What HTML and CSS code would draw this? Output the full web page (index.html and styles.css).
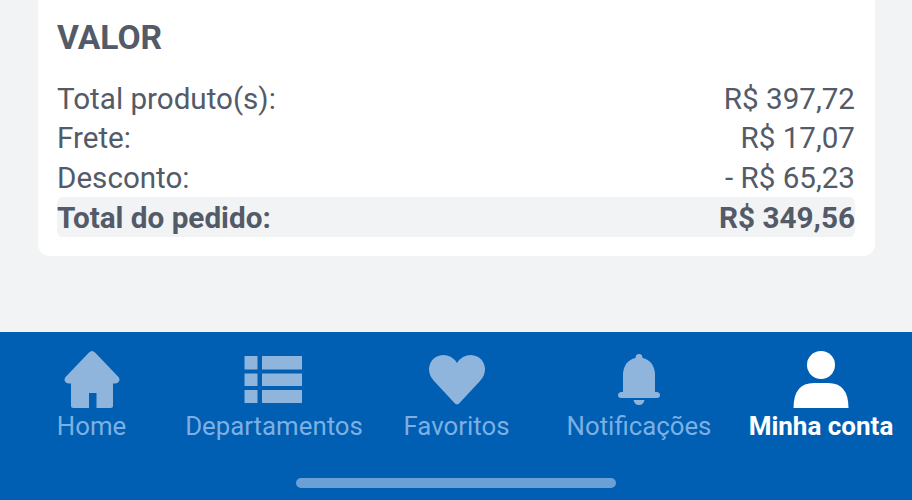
FILE: index.html
```html
<!DOCTYPE html>
<html lang="pt-BR">
<head>
    <meta charset="UTF-8">
    <meta name="viewport" content="width=device-width, initial-scale=1.0">
    <title>Pedido</title>
    <link rel="stylesheet" href="styles.css">
</head>
<body>
    <main class="content">
        <section class="card">
            <h2 class="card-title">VALOR</h2>
            <div class="row"><span>Total produto(s):</span><span>R$ 397,72</span></div>
            <div class="row"><span>Frete:</span><span>R$ 17,07</span></div>
            <div class="row"><span>Desconto:</span><span>- R$ 65,23</span></div>
            <div class="row row-total"><span>Total do pedido:</span><span>R$ 349,56</span></div>
        </section>
    </main>

    <nav class="tabbar">
        <div class="tabs">
            <a class="tab tab-wide">
                <svg class="tab-icon" viewBox="0 0 60 60" width="60" height="60">
                    <path d="M30 1 Q31.500 1 33 2.500 L56.500 27 Q58.500 30 56.500 32 Q55.500 33.500 51 33.500 L51 55.500 Q51 58 48.500 58 L34.500 58 L34.500 43 L27 43 L27 58 L11.500 58 Q9 58 9 55.500 L9 33.500 Q4.500 33.500 3.500 32 Q1.500 30 3.500 27 L27 2.500 Q28.500 1 30 1 Z"/>
                </svg>
                <span>Home</span>
            </a>
            <a class="tab">
                <svg class="tab-icon" viewBox="0 0 60 60" width="60" height="60">
                    <path d="M0.500 6 H13.500 V19.500 H0.500 Z M18 6 H58 V19.500 H18 Z M0.500 23.500 H13.500 V36 H0.500 Z M18 23.500 H58 V36 H18 Z M0.500 40 H13.500 V53 H0.500 Z M18 40 H58 V53 H18 Z"/>
                </svg>
                <span>Departamentos</span>
            </a>
            <a class="tab tab-wide">
                <svg class="tab-icon" viewBox="0 0 60 60" width="60" height="60">
                    <path d="M30 54.500 Q28.500 54.500 27 52.500 L7 31 Q1.500 25 2 18 Q4 6 16 5 Q25 5 30 13 Q35 5 44 5 Q56 6 58 18 Q58.500 25 53 31 L33 52.500 Q31.500 54.500 30 54.500 Z"/>
                </svg>
                <span>Favoritos</span>
            </a>
            <a class="tab">
                <svg class="tab-icon" viewBox="0 0 60 60" width="60" height="60">
                    <path d="M30 4 Q33.500 4 33.500 8 Q45 10.500 46 24 L46 42 L48 42 Q51 42.500 51 45 Q51 48 48 48 L12 48 Q9 48 9 45 Q9 42.500 12 42 L14 42 L14 24 Q15 10.500 26.500 8 Q26.500 4 30 4 Z M24.500 50 H35.500 Q34.500 55 30 55 Q25.500 55 24.500 50 Z"/>
                </svg>
                <span>Notificações</span>
            </a>
            <a class="tab tab-active">
                <svg class="tab-icon" viewBox="0 0 60 60" width="60" height="60">
                    <circle cx="30" cy="15" r="14"/>
                    <path d="M2.500 58 Q2.500 33 23 33 L37 33 Q57.500 33 57.500 58 Z"/>
                </svg>
                <span>Minha conta</span>
            </a>
        </div>
        <div class="home-indicator"></div>
    </nav>
</body>
</html>
```

FILE: styles.css
```css
html, body {
    margin: 0;
    padding: 0;
}

body {
    width: 912px;
    height: 500px;
    overflow: hidden;
    display: flex;
    flex-direction: column;
    background-color: #f1f3f5;
    font-family: Roboto, "Liberation Sans", sans-serif;
    color: #535a68;
}

.content {
    height: 332px;
    padding: 0 37px 0 38px;
    box-sizing: border-box;
}

.card {
    background: #fff;
    height: 256px;
    padding: 18px 20px 0 19px;
    box-sizing: border-box;
    border-radius: 0 0 12px 12px;
}

.card-title {
    margin: 0 0 21.5px 0;
    font-size: 33.6px;
    line-height: 40px;
    font-weight: 700;
}

.row {
    display: flex;
    justify-content: space-between;
    font-size: 29.6px;
    line-height: 39.5px;
    font-weight: 400;
}

.row-total {
    margin-top: -1px;
    padding-top: 1px;
    font-size: 29.7px;
    font-weight: 700;
    line-height: 39px;
    background: #f1f3f5;
    border-radius: 6px;
}

.tabbar {
    flex: 1;
    background: #005eb3;
    position: relative;
}

.tabs {
    display: flex;
    padding-top: 18px;
}

.tab {
    width: 182px;
    display: flex;
    flex-direction: column;
    align-items: center;
    color: #7cb0e2;
    font-size: 25.8px;
    line-height: 32px;
}

.tab-icon {
    display: block;
    fill: #8fb5dc;
}

.tab-wide { width: 183px; }
.tab-active { color: #fff; font-size: 26px; font-weight: 700; }
.tab-active .tab-icon { fill: #fff; }

.home-indicator {
    position: absolute;
    left: 296px;
    top: 146px;
    width: 320px;
    height: 10px;
    border-radius: 5px;
    background: #6ba0d6;
}
```
